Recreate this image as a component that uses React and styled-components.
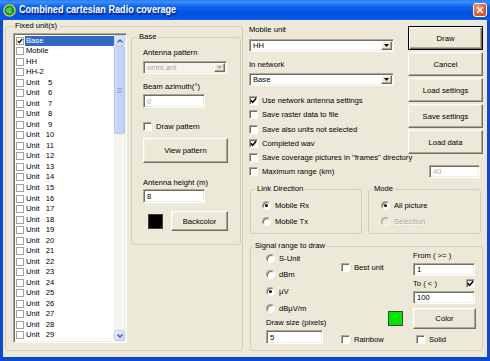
import React from "react";
import styled, { createGlobalStyle, css } from "styled-components";

const GlobalStyle = createGlobalStyle`
  html, body { margin: 0; padding: 0; background: #ffffff; }
  body { font-family: "Liberation Sans", Arial, sans-serif; font-size: 7.65px; color: #000; }
  *, *::before, *::after { box-sizing: border-box; }
`;

const sunken = css`
  border: 1px solid;
  border-color: #aca899 #ffffff #ffffff #aca899;
  box-shadow: inset 1px 1px 0 #716f64, inset -1px -1px 0 #f1efe2;
`;

const raised = css`
  border: 1px solid;
  border-color: #ffffff #716f64 #716f64 #ffffff;
  box-shadow: inset -1px -1px 0 #aca899, inset 1px 1px 0 #f1efe2;
  background: #ece9d8;
`;

const Window = styled.div`
  width: 490px;
  height: 361px;
  display: flex;
  flex-direction: column;
  background: #0a4adb;
  overflow: hidden;
`;

const TitleBar = styled.div`
  height: 20px;
  flex: none;
  display: flex;
  align-items: center;
  gap: 3px;
  padding: 0 3px 0 3px;
  background: linear-gradient(
    to bottom,
    #2a7cf6 0%,
    #3d8ffc 10%,
    #0f67ee 30%,
    #0557e3 55%,
    #0454e2 80%,
    #0a5cec 100%
  );
`;

const TitleText = styled.span`
  color: #ffffff;
  font: bold 9.1px "Liberation Sans", Arial, sans-serif;
  text-shadow: 1px 1px 0 #0a1f8a;
  white-space: nowrap;
  transform: scaleY(1.15);
`;

const CloseButton = styled.div`
  margin-left: auto;
  width: 14px;
  height: 14px;
  border: 1px solid #ffffff;
  border-radius: 3px;
  background: radial-gradient(circle at 35% 30%, #f2a184 0%, #e45a32 55%, #c9401b 100%);
  display: flex;
  align-items: center;
  justify-content: center;
`;

const Client = styled.div`
  flex: 1;
  margin: 0 3px 4px;
  background: #ece9d8;
  display: flex;
  align-items: flex-start;
  padding: 1px 0 0 2px;
`;

const Group = styled.fieldset`
  margin: 0;
  padding: 0;
  min-width: 0;
  flex: none;
  border: 1px solid #d0d0bf;
  border-radius: 3px;
  width: ${(p) => p.$w}px;
  height: ${(p) => p.$h}px;
`;

const Legend = styled.legend`
  margin-left: ${(p) => p.$ml}px;
  padding: 0 2px;
  line-height: 10px;
  height: 10px;
  white-space: nowrap;
`;

const FixedBody = styled.div`
  display: flex;
  align-items: flex-start;
  gap: 4px;
  padding: 1px 0 0 7px;
`;

const ListBox = styled.div`
  ${sunken};
  background: #ffffff;
  width: 114px;
  height: 310px;
  margin-top: 1px;
  padding: 1px;
  display: flex;
  flex: none;
`;

const ListItems = styled.div`
  flex: 1;
  overflow: hidden;
  padding: 0.3px 0 0 1px;
`;

const ListItem = styled.div`
  height: 10.54px;
  display: flex;
  align-items: center;
  white-space: nowrap;
`;

const ListCheck = styled.span`
  width: 8px;
  height: 8px;
  flex: none;
  border: 1px solid #a2a2a2;
  background: #ffffff;
  margin-right: 1px;
  display: flex;
  align-items: center;
  justify-content: center;
`;

const ListLabel = styled.span`
  flex: 1;
  height: 10px;
  line-height: 10px;
  padding-left: 1px;
  display: flex;
  background: ${(p) => (p.$selected ? "#316ac5" : "transparent")};
  color: ${(p) => (p.$selected ? "#ffffff" : "#000000")};
`;

const UnitWord = styled.span`
  width: 15px;
`;

const UnitNum = styled.span`
  width: 18px;
  text-align: center;
`;

const ScrollBar = styled.div`
  width: 11px;
  flex: none;
  display: flex;
  flex-direction: column;
  background: #f5f4ef;
`;

const ScrollButton = styled.div`
  height: 11px;
  flex: none;
  border: 1px solid #c0d0f8;
  border-radius: 2px;
  background: linear-gradient(135deg, #e8effd 0%, #c4d5fb 100%);
  display: flex;
  align-items: center;
  justify-content: center;
`;

const Thumb = styled.div`
  height: 88px;
  flex: none;
  border: 1px solid #b4c7f5;
  border-radius: 2px;
  background: linear-gradient(90deg, #cbd9fc 0%, #bccffa 100%);
  display: flex;
  align-items: center;
  justify-content: center;
`;

const Track = styled.div`
  flex: 1;
`;

const BaseBody = styled.div`
  display: flex;
  flex-direction: column;
  align-items: flex-start;
  padding-left: 11px;
`;

const Label = styled.div`
  line-height: ${(p) => p.$lh ?? 10}px;
  height: ${(p) => p.$lh ?? 10}px;
  margin-top: ${(p) => p.$mt ?? 0}px;
  margin-left: ${(p) => p.$ml ?? 0}px;
  white-space: nowrap;
`;

const Combo = styled.div`
  ${sunken};
  background: ${(p) => (p.$disabled ? "#f4f3ee" : "#ffffff")};
  width: ${(p) => p.$w}px;
  height: 13px;
  margin-top: ${(p) => p.$mt ?? 0}px;
  padding: 1px;
  display: flex;
  flex: none;
`;

const ComboValue = styled.span`
  flex: 1;
  padding-left: 2px;
  line-height: 9px;
  color: ${(p) => (p.$disabled ? "#aca899" : "#000000")};
`;

const ComboArrow = styled.span`
  ${raised};
  width: 11px;
  display: flex;
  align-items: center;
  justify-content: center;
`;

const Edit = styled.div`
  ${sunken};
  background: #ffffff;
  width: ${(p) => p.$w}px;
  height: ${(p) => p.$h ?? 13}px;
  margin-top: ${(p) => p.$mt ?? 0}px;
  margin-left: ${(p) => p.$ml ?? 0}px;
  margin-right: ${(p) => p.$mr ?? 0}px;
  padding-left: 3px;
  display: flex;
  align-items: center;
  flex: none;
  color: ${(p) => (p.$disabled ? "#aca899" : "#000000")};
`;

const Button = styled.div`
  ${raised};
  width: ${(p) => p.$w}px;
  height: ${(p) => p.$h}px;
  margin-top: ${(p) => p.$mt ?? 0}px;
  flex: none;
  display: flex;
  align-items: center;
  justify-content: center;
  white-space: nowrap;
  ${(p) =>
    p.$default &&
    css`
      border-color: #000000;
      box-shadow: inset 1px 1px 0 #ffffff, inset -1px -1px 0 #716f64, inset -2px -2px 0 #aca899;
    `}
`;

const CheckRow = styled.div`
  display: flex;
  align-items: center;
  gap: 4px;
  height: ${(p) => p.$h ?? 14.3}px;
  margin-top: ${(p) => p.$mt ?? 0}px;
  padding-left: ${(p) => p.$pl ?? 0}px;
  white-space: nowrap;
  flex: none;
`;

const Box = styled.span`
  width: 9px;
  height: 9px;
  flex: none;
  background: #ffffff;
  border: 1px solid;
  border-color: #aca899 #ffffff #ffffff #aca899;
  box-shadow: inset 1px 1px 0 #716f64;
  display: flex;
  align-items: center;
  justify-content: center;
`;

const RadioCircle = styled.span`
  width: 9px;
  height: 9px;
  flex: none;
  border-radius: 50%;
  background: ${(p) => (p.$disabled ? "#ece9d8" : "#ffffff")};
  border: 1px solid;
  border-color: #aca899 #ffffff #ffffff #aca899;
  box-shadow: inset 1px 1px 0 ${(p) => (p.$disabled ? "#c9c6b8" : "#716f64")};
  display: flex;
  align-items: center;
  justify-content: center;
  &::after {
    content: "";
    width: 3px;
    height: 3px;
    border-radius: 50%;
    background: #000000;
    display: ${(p) => (p.$on ? "block" : "none")};
  }
`;

const RadioText = styled.span`
  color: ${(p) => (p.$disabled ? "#aca899" : "#000000")};
  text-shadow: ${(p) => (p.$disabled ? "1px 1px 0 #ffffff" : "none")};
`;

const RightCol = styled.div`
  margin-left: 6px;
  width: 234px;
  padding-top: 4px;
  display: flex;
  flex-direction: column;
  flex: none;
`;

const TopGrid = styled.div`
  display: grid;
  grid-template-columns: 146px 75px;
  column-gap: 13px;
  align-items: start;
`;

const Stack = styled.div`
  display: flex;
  flex-direction: column;
  align-items: flex-start;
  margin-top: ${(p) => p.$mt ?? 0}px;
  margin-bottom: ${(p) => p.$mb ?? 0}px;
  gap: ${(p) => p.$gap ?? 0}px;
`;

const MaxRow = styled.div`
  display: flex;
  align-items: center;
  justify-content: space-between;
  height: 14.3px;
`;

const GroupRow = styled.div`
  display: flex;
  gap: 6px;
  margin-top: ${(p) => p.$mt ?? 0}px;
  padding-left: 1px;
`;

const RadioBody = styled.div`
  display: flex;
  flex-direction: column;
  gap: 2px;
  padding: 4px 0 0 ${(p) => p.$pl}px;
`;

const SignalBody = styled.div`
  display: flex;
  padding-left: 15px;
`;

const Column = styled.div`
  display: flex;
  flex-direction: column;
  align-items: flex-start;
  width: ${(p) => p.$w}px;
  margin-left: ${(p) => p.$ml ?? 0}px;
  padding-left: ${(p) => p.$pl ?? 0}px;
  flex: none;
`;

const ToRow = styled.div`
  width: 62px;
  height: 11px;
  margin-top: 2px;
  display: flex;
  align-items: center;
  justify-content: space-between;
`;

const Swatch = styled.div`
  width: 15px;
  height: 15px;
  flex: none;
  border: 1px solid #404040;
  background: ${(p) => p.$color};
  margin-top: ${(p) => p.$mt ?? 0}px;
  align-self: ${(p) => p.$align ?? "auto"};
`;

const SwatchRow = styled.div`
  display: flex;
  align-items: center;
  gap: 8px;
  margin-top: 8px;
  padding-left: 5px;
`;

const Tick = ({ size = 7 }) => (
  <svg width={size} height={size} viewBox="0 0 7 7">
    <path d="M0.8 3.4 L2.7 5.3 L6.2 1.2" stroke="#000" strokeWidth="1.5" fill="none" />
  </svg>
);

const DownTri = ({ color = "#000" }) => (
  <svg width="5" height="3" viewBox="0 0 5 3">
    <polygon points="0,0 5,0 2.5,3" fill={color} />
  </svg>
);

const Chevron = ({ up }) => (
  <svg width="6" height="4" viewBox="0 0 6 4">
    <polyline
      points={up ? "0.5,3.5 3,1 5.5,3.5" : "0.5,0.5 3,3 5.5,0.5"}
      stroke="#4d6185"
      strokeWidth="1.4"
      fill="none"
    />
  </svg>
);

const Check = ({ checked, label, mt, pl, h }) => (
  <CheckRow $mt={mt} $pl={pl} $h={h}>
    <Box>{checked && <Tick />}</Box>
    <span>{label}</span>
  </CheckRow>
);

const Radio = ({ on, disabled, label, h = 14 }) => (
  <CheckRow $h={h}>
    <RadioCircle $on={on} $disabled={disabled} />
    <RadioText $disabled={disabled}>{label}</RadioText>
  </CheckRow>
);

const ComboBox = ({ value, w, mt, disabled }) => (
  <Combo $w={w} $mt={mt} $disabled={disabled}>
    <ComboValue $disabled={disabled}>{value}</ComboValue>
    <ComboArrow>
      <DownTri color={disabled ? "#aca899" : "#000"} />
    </ComboArrow>
  </Combo>
);

const units = [
  { name: "Base" },
  { name: "Mobile" },
  { name: "HH" },
  { name: "HH-2" },
  ...Array.from({ length: 25 }, (_, i) => ({ name: "Unit", num: i + 5 })),
];

const AppIcon = () => (
  <svg width="13" height="13" viewBox="0 0 13 13">
    <circle cx="6.5" cy="6.5" r="6.2" fill="#e6d23c" />
    <circle cx="6.5" cy="6.5" r="4.9" fill="#168a2a" />
    <path d="M3 5.2 Q5.8 2.2 9.2 3.8 Q7.2 6.2 9.4 9 Q5.4 10.4 3.2 7.6 Z" fill="#4fcf4f" />
  </svg>
);

export default function App() {
  return (
    <>
      <GlobalStyle />
      <Window>
        <TitleBar>
          <AppIcon />
          <TitleText>Combined cartesian Radio coverage</TitleText>
          <CloseButton>
            <svg width="8" height="8" viewBox="0 0 8 8">
              <path d="M1 1 L7 7 M7 1 L1 7" stroke="#fff" strokeWidth="1.6" />
            </svg>
          </CloseButton>
        </TitleBar>
        <Client>
          <Group $w={238} $h={330}>
            <Legend $ml={7}>Fixed unit(s)</Legend>
            <FixedBody>
              <ListBox>
                <ListItems>
                  {units.map((u, i) => (
                    <ListItem key={i}>
                      <ListCheck>{i === 0 && <Tick size={6} />}</ListCheck>
                      <ListLabel $selected={i === 0}>
                        {u.num ? (
                          <>
                            <UnitWord>{u.name}</UnitWord>
                            <UnitNum>{u.num}</UnitNum>
                          </>
                        ) : (
                          u.name
                        )}
                      </ListLabel>
                    </ListItem>
                  ))}
                </ListItems>
                <ScrollBar>
                  <ScrollButton>
                    <Chevron up />
                  </ScrollButton>
                  <Thumb>
                    <svg width="5" height="5" viewBox="0 0 5 5">
                      <path d="M0 0.5H5M0 2.5H5M0 4.5H5" stroke="#8fa8e8" strokeWidth="1" />
                    </svg>
                  </Thumb>
                  <Track />
                  <ScrollButton>
                    <Chevron />
                  </ScrollButton>
                </ScrollBar>
              </ListBox>
              <Group $w={110} $h={213}>
                <Legend $ml={5}>Base</Legend>
                <BaseBody>
                  <Label $mt={6}>Antenna pattern</Label>
                  <ComboBox value="omni.ant" w={84} mt={3} disabled />
                  <Label $mt={8}>Beam azimuth(°)</Label>
                  <Edit $w={62} $h={14} $mt={2} $disabled>
                    0
                  </Edit>
                  <Check label="Draw pattern" mt={12} h={12} />
                  <Button $w={85} $h={25} $mt={6}>
                    View pattern
                  </Button>
                  <Label $mt={15}>Antenna height (m)</Label>
                  <Edit $w={62} $h={14} $mt={1}>
                    8
                  </Edit>
                  <SwatchRow>
                    <Swatch $color="#000000" />
                    <Button $w={57} $h={20}>
                      Backcolor
                    </Button>
                  </SwatchRow>
                </BaseBody>
              </Group>
            </FixedBody>
          </Group>

          <RightCol>
            <TopGrid>
              <Stack>
                <Label>Mobile unit</Label>
                <ComboBox value="HH" w={145} mt={4} />
                <Label $mt={8}>In network</Label>
                <ComboBox value="Base" w={145} mt={3} />
                <Check checked label="Use network antenna settings" mt={7.3} />
                <Check label="Save raster data to file" />
                <Check label="Save also units not selected" />
                <Check checked label="Completed wav" />
              </Stack>
              <Stack $mt={1} $mb={-4} $gap={2}>
                <Button $w={75} $h={24} $default>
                  Draw
                </Button>
                <Button $w={75} $h={24}>
                  Cancel
                </Button>
                <Button $w={75} $h={24}>
                  Load settings
                </Button>
                <Button $w={75} $h={24}>
                  Save settings
                </Button>
                <Button $w={75} $h={24}>
                  Load data
                </Button>
              </Stack>
            </TopGrid>
            <Check label={'Save coverage pictures in "frames" directory'} />
            <MaxRow>
              <Check label="Maximum range (km)" />
              <Edit $w={51} $mr={3} $disabled>
                40
              </Edit>
            </MaxRow>

            <GroupRow $mt={5}>
              <Group $w={112} $h={50}>
                <Legend $ml={4}>Link Direction</Legend>
                <RadioBody $pl={11}>
                  <Radio on label="Mobile Rx" />
                  <Radio label="Mobile Tx" />
                </RadioBody>
              </Group>
              <Group $w={113} $h={50}>
                <Legend $ml={3}>Mode</Legend>
                <RadioBody $pl={12}>
                  <Radio on label="All picture" />
                  <Radio disabled label="Selection" />
                </RadioBody>
              </Group>
            </GroupRow>

            <GroupRow $mt={7}>
              <Group $w={233} $h={110}>
                <Legend $ml={2}>Signal range to draw</Legend>
                <SignalBody>
                  <Column $w={62}>
                    <Stack $gap={2.67}>
                      <Radio label="S-Unit" />
                      <Radio label="dBm" />
                      <Radio on label="µV" />
                      <Radio label="dBµV/m" />
                    </Stack>
                    <Label $mt={3}>Draw size (pixels)</Label>
                    <Edit $w={57} $h={14} $mt={2}>
                      5
                    </Edit>
                  </Column>
                  <Column $w={63} $ml={12} $pl={1}>
                    <Check label="Best unit" mt={9} />
                    <Swatch $color="#00e600" $mt={37} $align="flex-end" />
                    <Check label="Rainbow" mt={6} />
                  </Column>
                  <Column $w={63} $ml={10}>
                    <Label $lh={9}>From ( &gt;= )</Label>
                    <Edit $w={62} $mt={3}>
                      1
                    </Edit>
                    <ToRow>
                      <span>To ( &lt; )</span>
                      <Box>
                        <Tick />
                      </Box>
                    </ToRow>
                    <Edit $w={62} $mt={2}>
                      100
                    </Edit>
                    <Button $w={63} $h={21} $mt={4}>
                      Color
                    </Button>
                    <Check label="Solid" mt={3} pl={3} />
                  </Column>
                </SignalBody>
              </Group>
            </GroupRow>
          </RightCol>
        </Client>
      </Window>
    </>
  );
}
